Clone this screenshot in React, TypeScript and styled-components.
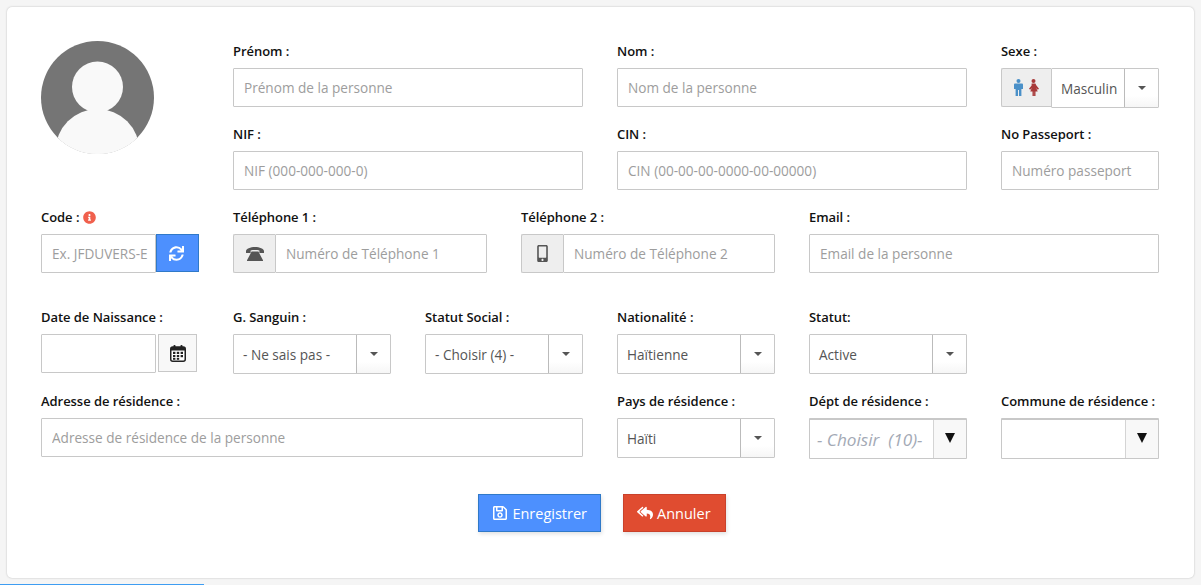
import styled, { createGlobalStyle } from 'styled-components';
import { FaInfoCircle, FaMobileAlt, FaRegSave, FaReplyAll, FaSync } from 'react-icons/fa';

const GlobalStyle = createGlobalStyle`
  html, body {
    margin: 0;
    height: 100%;
    background: #f5f5f5;
    overflow: hidden;
  }
  body {
    font-family: "Open Sans", "Liberation Sans", sans-serif;
    font-size: 14px;
    color: #555;
  }
`;

const Page = styled.div`
  padding: 7px;
  box-sizing: border-box;
  height: 585px;
`;

const Card = styled.form`
  box-sizing: border-box;
  width: 1187px;
  height: 571px;
  padding: 35px 34px 0;
  background: #fff;
  border-radius: 5px;
  box-shadow: 0 0 2px rgba(0, 0, 0, 0.25);
`;

const FormGrid = styled.div`
  display: grid;
  grid-template-columns: repeat(12, 62px);
  column-gap: 34px;
  row-gap: 18px;
  align-items: start;
`;

const AvatarCell = styled.div`
  grid-column: span 2;
  grid-row: span 2;
  margin-top: -1px;
`;

const Field = styled.div<{ $span: number; $spaced?: boolean }>`
  grid-column: span ${(p) => p.$span};
  margin-bottom: ${(p) => (p.$spaced ? '17px' : '0')};
`;

const Label = styled.label`
  display: flex;
  align-items: center;
  gap: 4px;
  height: 18px;
  margin-bottom: 8px;
  font-size: 13px;
  font-weight: 600;
  letter-spacing: -0.05px;
  color: #111;
  white-space: nowrap;

  svg {
    color: #f0604d;
    font-size: 13px;
  }
`;

const Group = styled.div`
  display: flex;
  align-items: flex-start;
`;

const SexGroup = styled(Group)`
  margin-bottom: -1px;
`;

const DateGroup = styled(Group)`
  margin-right: 2px;
`;

const Input = styled.input`
  flex: 1;
  min-width: 0;
  width: 100%;
  box-sizing: border-box;
  height: 39px;
  padding: 0 10px;
  border: 1px solid #c8c8c8;
  border-radius: 1px;
  background: #fff;
  font: 13.6px "Open Sans", "Liberation Sans", sans-serif;
  color: #555;
  outline: none;

  &::placeholder {
    color: #9d9d9d;
    opacity: 1;
  }
`;

const CodeInput = styled(Input)`
  padding-right: 6px;
`;

const Addon = styled.span`
  flex: none;
  box-sizing: border-box;
  width: 42px;
  height: 39px;
  display: flex;
  align-items: center;
  justify-content: center;
  background: #eee;
  border: 1px solid #c8c8c8;
  border-right: 0;
  border-radius: 2px 0 0 2px;
  color: #555;
  font-size: 17px;
`;

const SexAddon = styled(Addon)`
  width: 50px;
`;

const RefreshButton = styled.button`
  flex: none;
  box-sizing: border-box;
  width: 43px;
  height: 38px;
  padding: 0 2px 0 0;
  display: flex;
  align-items: center;
  justify-content: center;
  background: #4d90fe;
  border: 1px solid #3079c8;
  color: #fff;
  font-size: 15px;
`;

const CalendarButton = styled.button`
  flex: none;
  box-sizing: border-box;
  width: 39px;
  height: 38px;
  margin-left: 2px;
  padding: 0;
  display: flex;
  align-items: center;
  justify-content: center;
  background: #f8f8f8;
  border: 1px solid #c8c8c8;
`;

const Select = styled.div<{ $plain?: boolean }>`
  flex: 1;
  min-width: 0;
  box-sizing: border-box;
  height: ${(p) => (p.$plain ? '41px' : '40px')};
  display: flex;
  border: 1px solid #c8c8c8;
  border-top-width: ${(p) => (p.$plain ? '2px' : '1px')};
  border-radius: 1px;
  background: #fff;
`;

const SelectValue = styled.span<{ $muted?: boolean }>`
  flex: 1;
  min-width: 0;
  display: flex;
  align-items: center;
  padding-left: ${(p) => (p.$muted ? '7px' : '9px')};
  font-size: ${(p) => (p.$muted ? '17.2px' : '13.6px')};
  font-style: ${(p) => (p.$muted ? 'italic' : 'normal')};
  color: ${(p) => (p.$muted ? '#a3a9b5' : '#555')};
  white-space: pre;
  overflow: hidden;
`;

const SelectArrow = styled.span<{ $plain?: boolean; $width: number }>`
  flex: none;
  box-sizing: border-box;
  width: ${(p) => p.$width}px;
  display: flex;
  align-items: ${(p) => (p.$plain ? 'flex-start' : 'center')};
  justify-content: center;
  padding-top: ${(p) => (p.$plain ? '13px' : '0')};
  border-left: 1px solid ${(p) => (p.$plain ? '#d4d4d4' : '#bbb')};
  background: ${(p) => (p.$plain ? '#f8f8f8' : 'linear-gradient(#fff 70%, #f6f6f6)')};

  &::after {
    content: '';
    border-style: solid;
    border-color: ${(p) => (p.$plain ? '#111' : '#555')} transparent transparent;
    border-width: ${(p) => (p.$plain ? '10px 5.5px 0' : '4px 4.5px 0')};
  }
`;

const Actions = styled.div`
  display: flex;
  justify-content: center;
  gap: 22px;
  margin-top: 35px;
  padding-left: 3px;
`;

const ActionButton = styled.button<{ $tone: 'blue' | 'red' }>`
  box-sizing: border-box;
  height: 38px;
  display: flex;
  align-items: center;
  gap: 4px;
  padding: ${(p) => (p.$tone === 'blue' ? '0 13px' : '0 14px 0 13px')};
  border: 1px solid ${(p) => (p.$tone === 'blue' ? '#3079c8' : '#c9412b')};
  background: ${(p) => (p.$tone === 'blue' ? '#4d90fe' : '#e04c30')};
  box-shadow: 1px 2px 4px rgba(0, 0, 0, 0.12);
  color: #fff;
  font: 14.5px "Open Sans", "Liberation Sans", sans-serif;

  svg {
    font-size: 16px;
  }
`;

const ProgressBar = styled.div`
  position: fixed;
  left: 0;
  bottom: 0;
  width: 204px;
  height: 1px;
  background: #3e9df2;
`;

function Avatar() {
  return (
    <svg width="114" height="114" viewBox="0 0 114 114" style={{ display: 'block' }}>
      <defs>
        <clipPath id="avatar-clip">
          <circle cx="56.5" cy="56.5" r="56.5" />
        </clipPath>
      </defs>
      <circle cx="56.5" cy="56.5" r="56.5" fill="#757575" />
      <g clipPath="url(#avatar-clip)" fill="#f9f9f9">
        <circle cx="56.5" cy="46" r="25.5" />
        <ellipse cx="56.5" cy="110" rx="42" ry="42" />
        <rect x="18" y="98" width="78" height="16" />
      </g>
    </svg>
  );
}

function DeskPhone() {
  return (
    <svg width="18" height="14" viewBox="0 0 18 14" fill="#555">
      <path d="M0 4.2C0 1.8 4.5 0 9 0s9 1.8 9 4.2V6h-4.6V3.6c-1-.4-3-.5-4.4-.5s-3.4.1-4.4.5V6H0z" />
      <path d="M5.6 4.6h6.8L17 13.2V14H1v-.8z" />
    </svg>
  );
}

function Couple() {
  return (
    <svg width="26" height="17" viewBox="0 0 26 17">
      <g fill="#4a90c8">
        <circle cx="4.5" cy="2" r="2" />
        <path d="M1.2 4.4h6.6c.7 0 1.2.5 1.2 1.2V10H7.4v7H5v-6H4v6H1.6v-7H0V5.600c0-.7.5-1.200 1.200-1.200z" />
      </g>
      <g fill="#a83a3a">
        <circle cx="19.500" cy="2" r="2" />
        <path d="M17.600 4.400h3.800l1 2 2.600 3.400-1.200 1-1.500-1.700 1.400 3.400h-2.200V17h-1.400v-4.500h-.200V17h-1.400v-4.500h-2.200l1.400-3.400-1.500 1.700-1.200-1 2.600-3.400z" />
      </g>
    </svg>
  );
}

function CalendarIcon() {
  return (
    <svg width="16" height="17" viewBox="0 0 16 17">
      <rect x="0.75" y="2" width="14.5" height="14.25" rx="2" fill="#fff" stroke="#222" strokeWidth="1.5" />
      <rect x="1" y="2" width="14" height="3.500" fill="#222" />
      <rect x="3.500" y="0" width="2" height="3.500" rx="0.800" fill="#222" />
      <rect x="10.500" y="0" width="2" height="3.500" rx="0.800" fill="#222" />
      <g fill="#222">
        <rect x="3" y="6.800" width="2.400" height="2.200" />
        <rect x="6.800" y="6.800" width="2.400" height="2.200" />
        <rect x="10.600" y="6.800" width="2.400" height="2.200" />
        <rect x="3" y="10" width="2.400" height="2.200" />
        <rect x="6.800" y="10" width="2.400" height="2.200" />
        <rect x="10.600" y="10" width="2.400" height="2.200" />
        <rect x="3" y="13" width="2.400" height="1.800" />
        <rect x="6.800" y="13" width="2.400" height="1.800" />
      </g>
    </svg>
  );
}

function PlainSelect({ value, arrow }: { value: string; arrow: number }) {
  return (
    <Group>
      <Select>
        <SelectValue>{value}</SelectValue>
        <SelectArrow $width={arrow} />
      </Select>
    </Group>
  );
}

export default function App() {
  return (
    <Page>
      <GlobalStyle />
      <Card>
        <FormGrid>
          <AvatarCell>
            <Avatar />
          </AvatarCell>
          <Field $span={4}>
            <Label>Prénom :</Label>
            <Input placeholder="Prénom de la personne" />
          </Field>
          <Field $span={4}>
            <Label>Nom :</Label>
            <Input placeholder="Nom de la personne" />
          </Field>
          <Field $span={2}>
            <Label>Sexe :</Label>
            <SexGroup>
              <SexAddon>
                <Couple />
              </SexAddon>
              <Select>
                <SelectValue>Masculin</SelectValue>
                <SelectArrow $width={34} />
              </Select>
            </SexGroup>
          </Field>

          <Field $span={4}>
            <Label>NIF :</Label>
            <Input placeholder="NIF (000-000-000-0)" />
          </Field>
          <Field $span={4}>
            <Label>CIN :</Label>
            <Input placeholder="CIN (00-00-00-0000-00-00000)" />
          </Field>
          <Field $span={2}>
            <Label>No Passeport :</Label>
            <Input placeholder="Numéro passeport" />
          </Field>

          <Field $span={2} $spaced>
            <Label>
              Code : <FaInfoCircle />
            </Label>
            <Group>
              <CodeInput placeholder="Ex. JFDUVERS-E" />
              <RefreshButton type="button">
                <FaSync />
              </RefreshButton>
            </Group>
          </Field>
          <Field $span={3} $spaced>
            <Label>Téléphone 1 :</Label>
            <Group>
              <Addon>
                <DeskPhone />
              </Addon>
              <Input placeholder="Numéro de Téléphone 1" />
            </Group>
          </Field>
          <Field $span={3} $spaced>
            <Label>Téléphone 2 :</Label>
            <Group>
              <Addon>
                <FaMobileAlt />
              </Addon>
              <Input placeholder="Numéro de Téléphone 2" />
            </Group>
          </Field>
          <Field $span={4} $spaced>
            <Label>Email :</Label>
            <Input placeholder="Email de la personne" />
          </Field>

          <Field $span={2}>
            <Label>Date de Naissance :</Label>
            <DateGroup>
              <Input />
              <CalendarButton type="button">
                <CalendarIcon />
              </CalendarButton>
            </DateGroup>
          </Field>
          <Field $span={2}>
            <Label>G. Sanguin :</Label>
            <PlainSelect value="- Ne sais pas -" arrow={34} />
          </Field>
          <Field $span={2}>
            <Label>Statut Social :</Label>
            <PlainSelect value="- Choisir (4) -" arrow={34} />
          </Field>
          <Field $span={2}>
            <Label>Nationalité :</Label>
            <PlainSelect value="Haïtienne" arrow={34} />
          </Field>
          <Field $span={2}>
            <Label>Statut:</Label>
            <PlainSelect value="Active" arrow={34} />
          </Field>
          <Field $span={2} />

          <Field $span={6}>
            <Label>Adresse de résidence :</Label>
            <Input placeholder="Adresse de résidence de la personne" />
          </Field>
          <Field $span={2}>
            <Label>Pays de résidence :</Label>
            <PlainSelect value="Haïti" arrow={34} />
          </Field>
          <Field $span={2}>
            <Label>Dépt de résidence :</Label>
            <Group>
              <Select $plain>
                <SelectValue $muted>{'- Choisir  (10)-'}</SelectValue>
                <SelectArrow $plain $width={33} />
              </Select>
            </Group>
          </Field>
          <Field $span={2}>
            <Label>Commune de résidence :</Label>
            <Group>
              <Select $plain>
                <SelectValue />
                <SelectArrow $plain $width={33} />
              </Select>
            </Group>
          </Field>
        </FormGrid>

        <Actions>
          <ActionButton type="button" $tone="blue">
            <FaRegSave /> Enregistrer
          </ActionButton>
          <ActionButton type="button" $tone="red">
            <FaReplyAll /> Annuler
          </ActionButton>
        </Actions>
      </Card>
      <ProgressBar />
    </Page>
  );
}
